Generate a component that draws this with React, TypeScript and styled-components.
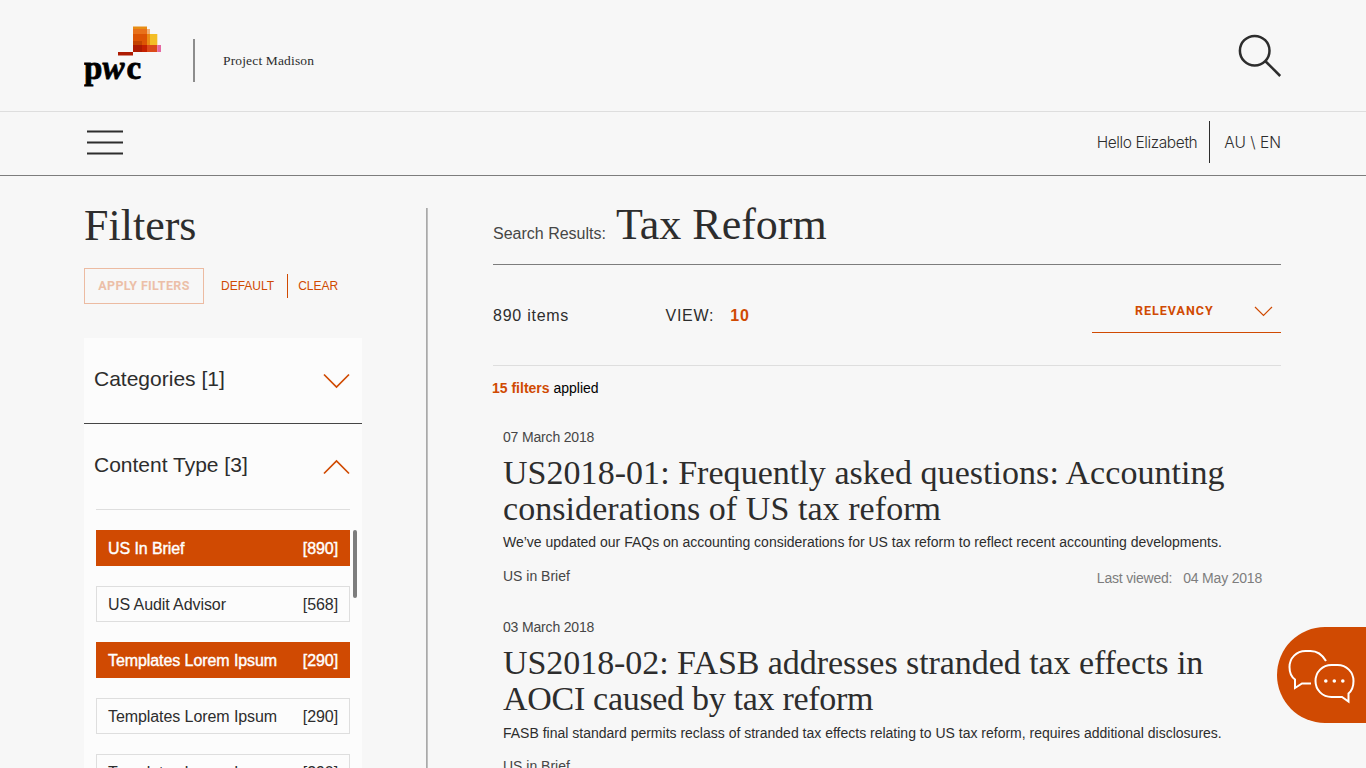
import React from "react";
import styled, { createGlobalStyle } from "styled-components";

const orange = "#d04a02";
const sans = '"Liberation Sans", Arial, sans-serif';
const serif = '"Liberation Serif", Georgia, serif';

const Global = createGlobalStyle`
  * { box-sizing: border-box; }
  body { margin: 0; background: #f7f7f7; color: #2d2d2d; font-family: ${sans}; overflow: hidden; }
  h1, h2, h3, p { margin: 0; font-weight: 400; }
  button { font: inherit; background: none; border: 0; padding: 0; cursor: pointer; white-space: nowrap; }
`;

const Page = styled.div`
  position: relative;
  width: 1366px;
  height: 768px;
  overflow: hidden;
  background: #f7f7f7;
`;
const Header = styled.header`
  display: flex;
  height: 112px;
  padding: 0 84px;
  border-bottom: 1px solid #dedede;
`;
const Logo = styled.svg`
  width: 80px;
  height: 66px;
  margin-top: 24px;
  flex: none;
`;
const LogoText = styled.text`
  font-family: ${serif};
  font-weight: 700;
  font-size: 33px;
  fill: #000;
  stroke: #000;
  stroke-width: 0.8px;
`;
const BrandDivider = styled.div`
  width: 2px;
  height: 43px;
  margin: 39px 28px 0 29px;
  background: #8d8d8d;
`;
const Project = styled.span`
  flex: 1;
  margin-top: 51px;
  font: 13.5px/20px ${serif};
  letter-spacing: 0.15px;
`;
const SearchIcon = styled.svg`
  width: 46px;
  height: 46px;
  margin: 33px -1px 0 0;
`;
const Nav = styled.nav`
  display: flex;
  align-items: flex-start;
  height: 64px;
  padding: 9px 85px 0 87px;
  border-bottom: 1px solid #7d7d7d;
`;
const Burger = styled.svg`
  width: 36px;
  height: 26px;
  margin: 9px auto 0 0;
`;
const NavText = styled.span<{ $spacing: number }>`
  font-family: Inter, ${sans};
  font-weight: 300;
  font-size: 15.5px;
  line-height: 43px;
  letter-spacing: ${(p) => p.$spacing}px;
`;
const NavDivider = styled.div`
  width: 1px;
  height: 42px;
  margin: 0 14px 0 12px;
  background: #2d2d2d;
`;
const Main = styled.main`
  display: flex;
  height: 592px;
  padding: 0 85px 0 84px;
`;
const Sidebar = styled.aside`
  width: 278px;
  padding-top: 24px;
`;
const Heading = styled.h1`
  font: 44px/52px ${serif};
`;
const Actions = styled.div`
  display: flex;
  align-items: center;
  height: 36px;
  margin-top: 16px;
  color: ${orange};
`;
const Apply = styled.button`
  width: 120px;
  height: 36px;
  padding-bottom: 1px;
  border: 1px solid #ecbba2;
  color: #ecbfa8;
  font-family: Roboto, ${sans};
  font-size: 12.5px;
  font-weight: 700;
  letter-spacing: 0.35px;
`;
const TextButton = styled.button`
  color: ${orange};
  font-size: 12px;
  line-height: 36px;
`;
const DefaultButton = styled(TextButton)`
  margin-left: 17px;
`;
const ActionDivider = styled.div`
  width: 1px;
  height: 24px;
  margin: 0 10px 0 13px;
  background: ${orange};
`;
const Panels = styled.div`
  margin-top: 34px;
  height: 440px;
  background: #fcfcfc;
`;
const PanelHead = styled.div<{ $open?: boolean }>`
  display: flex;
  justify-content: space-between;
  height: 86px;
  margin: ${(p) => (p.$open ? "0 12px" : "0")};
  padding: ${(p) => (p.$open ? "0" : "0 12px")};
  border-bottom: 1px solid ${(p) => (p.$open ? "#dedede" : "#464646")};
`;
const PanelTitle = styled.h2`
  margin: 0 0 0 -2px;
  font-size: 21px;
  line-height: 82px;
`;
const Chevron = styled.svg<{ $up?: boolean }>`
  width: 27px;
  height: 16px;
  margin-top: 35px;
  transform: ${(p) => (p.$up ? "scaleY(-1)" : "none")};
`;
const ListWrap = styled.div`
  display: flex;
  padding: 20px 5px 0 12px;
`;
const List = styled.div`
  display: flex;
  flex-direction: column;
  gap: 20px;
  width: 254px;
`;
const Option = styled.div<{ $on?: boolean }>`
  display: flex;
  justify-content: space-between;
  height: 36px;
  padding: 0 11px;
  border: 1px solid ${(p) => (p.$on ? orange : "#dedede")};
  background: ${(p) => (p.$on ? orange : "#fcfcfc")};
  color: ${(p) => (p.$on ? "#fff" : "#2d2d2d")};
  -webkit-text-stroke: ${(p) => (p.$on ? "0.4px #fff" : "0")};
  font-size: 16px;
  line-height: 35px;
  letter-spacing: -0.08px;
`;
const Thumb = styled.div`
  width: 4px;
  height: 68px;
  margin-left: 3px;
  border-radius: 2px;
  background: #7d7d7d;
`;
const ColumnDivider = styled.div`
  width: 2px;
  margin: 32px 65px 0 64px;
  background: linear-gradient(to right, #a9a9a9 50%, #bfbfbf 50%);
`;
const Results = styled.section`
  flex: 1;
  min-width: 0;
`;
const ResultsHead = styled.div`
  display: flex;
  align-items: baseline;
  height: 89px;
  padding-top: 23px;
  border-bottom: 1px solid #7d7d7d;
`;
const ResultsLabel = styled.span`
  width: 123px;
  font-size: 16px;
  color: #464646;
`;
const Toolbar = styled.div`
  display: flex;
  height: 101px;
  border-bottom: 1px solid #dedede;
  font-size: 16px;
  line-height: 101px;
  letter-spacing: 0.75px;
`;
const ItemCount = styled.span`
  width: 172.5px;
`;
const ViewCount = styled.b`
  margin-left: 16px;
  color: ${orange};
`;
const Sort = styled.div`
  display: flex;
  justify-content: space-between;
  width: 189px;
  height: 38px;
  margin: 30px 0 0 auto;
  padding: 0 8px 0 43px;
  border-bottom: 1px solid ${orange};
  color: ${orange};
  font-family: Roboto, ${sans};
  font-size: 12.5px;
  font-weight: 700;
  line-height: 32px;
  letter-spacing: 1px;
`;
const SortChevron = styled.svg`
  width: 19px;
  height: 11px;
  margin-top: 11px;
`;
const Applied = styled.p`
  margin: 13px 0 0 -1px;
  font-size: 14px;
  line-height: 18px;
  color: #000;
  b { color: ${orange}; }
`;
const Article = styled.article`
  margin: 31px 19px 0 10px;
`;
const DateText = styled.p`
  font-size: 14px;
  line-height: 18px;
  letter-spacing: -0.17px;
  color: #464646;
`;
const Title = styled.h3`
  margin-top: 9px;
  font: 34px/36px ${serif};
  white-space: nowrap;
`;
const TitleLine = styled.span<{ $spacing: number }>`
  display: block;
  letter-spacing: ${(p) => p.$spacing}px;
`;
const Summary = styled.p<{ $top: number }>`
  margin-top: ${(p) => p.$top}px;
  font-size: 14px;
  line-height: 18px;
  white-space: nowrap;
`;
const Meta = styled.div<{ $top: number }>`
  display: flex;
  justify-content: space-between;
  margin-top: ${(p) => p.$top}px;
  height: 20px;
  font-size: 14px;
  line-height: 18px;
  color: #464646;
`;
const Viewed = styled.span`
  padding-top: 2px;
  color: #7d7d7d;
  letter-spacing: -0.2px;
  time { margin-left: 11px; }
`;
const Chat = styled.button`
  position: absolute;
  right: 0;
  top: 627px;
  width: 89px;
  height: 96px;
  border-radius: 48px 0 0 48px;
  background: ${orange};
`;
const ChatIcon = styled.svg`
  display: block;
  width: 89px;
  height: 96px;
`;

const options = [
  { name: "US In Brief", count: 890, on: true },
  { name: "US Audit Advisor", count: 568 },
  { name: "Templates Lorem Ipsum", count: 290, on: true },
  { name: "Templates Lorem Ipsum", count: 290 },
  { name: "Templates Lorem Ipsum", count: 290 },
];

const articles = [
  {
    date: "07 March 2018",
    lines: [
      { text: "US2018-01: Frequently asked questions: Accounting", spacing: 0.04 },
      { text: "considerations of US tax reform", spacing: 0.06 },
    ],
    summary: "We’ve updated our FAQs on accounting considerations for US tax reform to reflect recent accounting developments.",
    summaryTop: 6,
    metaTop: 16,
    viewed: "04 May 2018",
  },
  {
    date: "03 March 2018",
    lines: [
      { text: "US2018-02: FASB addresses stranded tax effects in", spacing: -0.06 },
      { text: "AOCI caused by tax reform", spacing: -0.3 },
    ],
    summary: "FASB final standard permits reclass of stranded tax effects relating to US tax reform, requires additional disclosures.",
    summaryTop: 7,
    metaTop: 15,
    viewed: "",
  },
];

const PanelChevron = ({ up }: { up?: boolean }) => (
  <Chevron $up={up} viewBox="0 0 27 16" fill="none" stroke={orange} strokeWidth="1.7">
    <path d="M1 1.5 13.5 14 26 1.5" />
  </Chevron>
);

export default function App() {
  return (
    <Page>
      <Global />
      <Header>
        <Logo viewBox="84 24 80 66">
          <rect x="118" y="52" width="15" height="3.5" fill="#ad1b02" />
          <rect x="133" y="26.5" width="14" height="25" fill="#e88d14" />
          <rect x="133" y="29" width="17" height="22.5" fill="#e8711a" />
          <rect x="147" y="29" width="3" height="5" fill="#f0b37a" />
          <rect x="150" y="34" width="7.3" height="11" fill="#f3be26" />
          <rect x="133" y="34" width="14" height="17.5" fill="#dc5404" />
          <rect x="147" y="34" width="3" height="11" fill="#eb8c14" />
          <rect x="133" y="41" width="9" height="4" fill="#c34300" />
          <rect x="133" y="45" width="14" height="7" fill="#c52000" />
          <rect x="133" y="45" width="9" height="7" fill="#ad1b02" />
          <rect x="147" y="45" width="10.3" height="7" fill="#dc4a1a" />
          <rect x="157.3" y="45" width="3.7" height="7" fill="#e669a2" />
          <LogoText x="84" y="79">p</LogoText>
          <LogoText x="102.5" y="79" fontStyle="italic">w</LogoText>
          <LogoText x="126.5" y="79">c</LogoText>
        </Logo>
        <BrandDivider />
        <Project>Project Madison</Project>
        <SearchIcon viewBox="0 0 46 46" fill="none" stroke="#2d2d2d" strokeWidth="2.5">
          <circle cx="17.7" cy="17.7" r="14.8" />
          <path d="M28.2 28 43.2 43" />
        </SearchIcon>
      </Header>
      <Nav>
        <Burger viewBox="0 0 36 26" stroke="#2d2d2d" strokeWidth="2">
          <path d="M0 1.5h36M0 12.5h36M0 23.5h36" />
        </Burger>
        <NavText $spacing={-0.4}>Hello Elizabeth</NavText>
        <NavDivider />
        <NavText $spacing={0}>AU \ EN</NavText>
      </Nav>
      <Main>
        <Sidebar>
          <Heading>Filters</Heading>
          <Actions>
            <Apply>APPLY FILTERS</Apply>
            <DefaultButton>DEFAULT</DefaultButton>
            <ActionDivider />
            <TextButton>CLEAR</TextButton>
          </Actions>
          <Panels>
            <PanelHead>
              <PanelTitle>Categories [1]</PanelTitle>
              <PanelChevron />
            </PanelHead>
            <PanelHead $open>
              <PanelTitle>Content Type [3]</PanelTitle>
              <PanelChevron up />
            </PanelHead>
            <ListWrap>
              <List>
                {options.map((o, i) => (
                  <Option key={i} $on={o.on}>
                    <span>{o.name}</span>
                    <span>[{o.count}]</span>
                  </Option>
                ))}
              </List>
              <Thumb />
            </ListWrap>
          </Panels>
        </Sidebar>
        <ColumnDivider />
        <Results>
          <ResultsHead>
            <ResultsLabel>Search Results:</ResultsLabel>
            <Heading>Tax Reform</Heading>
          </ResultsHead>
          <Toolbar>
            <ItemCount>890 items</ItemCount>
            <span>VIEW:</span>
            <ViewCount>10</ViewCount>
            <Sort>
              RELEVANCY
              <SortChevron viewBox="0 0 19 11" fill="none" stroke={orange} strokeWidth="1.2">
                <path d="M1 1 9.5 9.5 18 1" />
              </SortChevron>
            </Sort>
          </Toolbar>
          <Applied>
            <b>15 filters</b> applied
          </Applied>
          {articles.map((a) => (
            <Article key={a.date}>
              <DateText>{a.date}</DateText>
              <Title>
                {a.lines.map((l) => (
                  <TitleLine key={l.text} $spacing={l.spacing}>{l.text}</TitleLine>
                ))}
              </Title>
              <Summary $top={a.summaryTop}>{a.summary}</Summary>
              <Meta $top={a.metaTop}>
                <span>US in Brief</span>
                {a.viewed && (
                  <Viewed>
                    Last viewed:<time>{a.viewed}</time>
                  </Viewed>
                )}
              </Meta>
            </Article>
          ))}
        </Results>
      </Main>
      <Chat aria-label="Chat">
        <ChatIcon viewBox="0 0 89 96" fill="none" stroke="#fff" strokeWidth="2">
          <path d="M49 34C45.500 28 40.500 24 33.500 24h-5C19.500 24 12.500 31 12.500 40c0 6 2 10 5.500 12.500V61l7-4.500h9" />
          <path d="M54.500 38h6c9 0 16 7 16 16 0 6-2 10-5 12.500V74.500L65 70H54.500c-9 0-16-7-16-16s7-16 16-16z" />
          <g fill="#fff" stroke="none">
            <circle cx="48.8" cy="54" r="1.8" />
            <circle cx="57.3" cy="54" r="1.8" />
            <circle cx="65.800" cy="54" r="1.8" />
          </g>
        </ChatIcon>
      </Chat>
    </Page>
  );
}
